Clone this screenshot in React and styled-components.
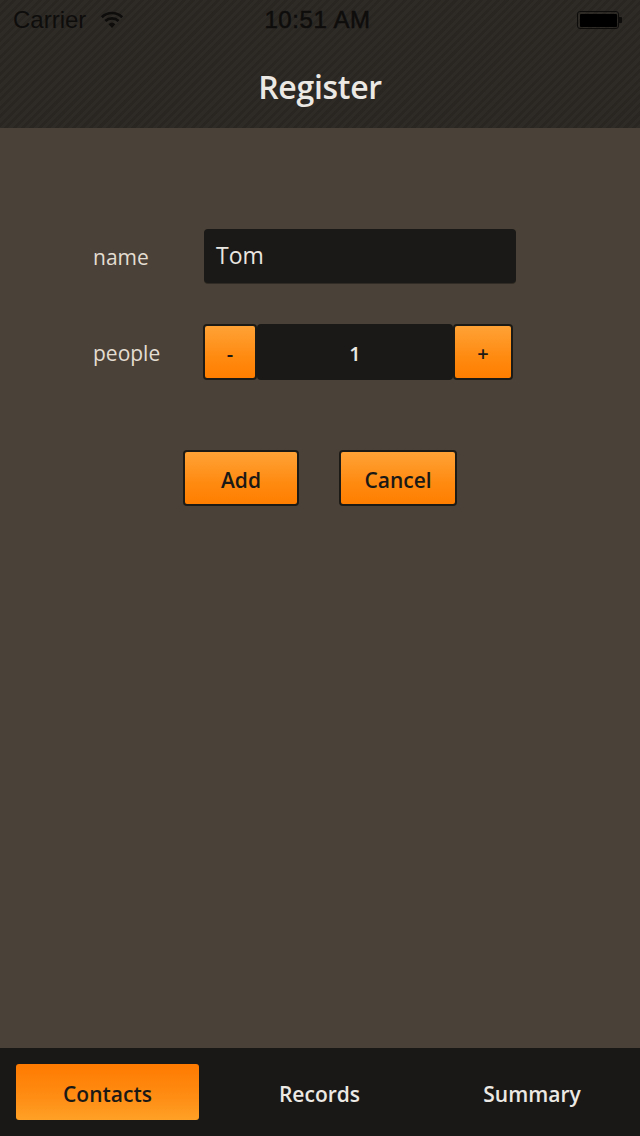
import React, { useState } from "react";
import styled, { createGlobalStyle } from "styled-components";

const Global = createGlobalStyle`
  html, body { margin: 0; padding: 0; }
  body { background: #4a4238; font-family: "Open Sans", sans-serif; }
  * { box-sizing: border-box; }
`;

const Screen = styled.div`
  width: 640px;
  height: 1136px;
  display: flex;
  flex-direction: column;
  background: #4a4238;
`;

const Top = styled.header`
  height: 128px;
  display: flex;
  flex-direction: column;
  background-color: #2a2723;
  background-image: repeating-linear-gradient(
    135deg,
    rgba(255, 255, 255, 0.018) 0px,
    rgba(255, 255, 255, 0.018) 3px,
    rgba(0, 0, 0, 0.02) 3px,
    rgba(0, 0, 0, 0.02) 6px
  );
`;

const StatusBar = styled.div`
  height: 40px;
  display: grid;
  grid-template-columns: 1fr auto 1fr;
  align-items: center;
  padding: 0 18px 0 13px;
  font-family: "Liberation Sans", Arial, sans-serif;
  font-size: 24px;
  color: #0e0d0c;
`;

const Carrier = styled.div`
  display: flex;
  align-items: center;
  gap: 14px;
`;

const Time = styled.div`
  font-weight: 400;
  letter-spacing: 0.6px;
  -webkit-text-stroke: 0.5px #0e0d0c;
`;

const BatteryWrap = styled.div`
  justify-self: end;
  display: flex;
  align-items: center;
`;

const BatteryBody = styled.div`
  width: 42px;
  height: 18px;
  border: 1.5px solid #0e0d0c;
  border-radius: 3px;
  padding: 1.5px;
  display: flex;
`;

const BatteryFill = styled.div`
  flex: 1;
  background: #000;
  border-radius: 1px;
`;

const BatteryTip = styled.div`
  width: 3px;
  height: 6px;
  background: #0e0d0c;
  border-radius: 0 1px 1px 0;
`;

const Title = styled.h1`
  flex: 1;
  margin: 0;
  display: flex;
  align-items: center;
  justify-content: center;
  padding-top: 4px;
  font-size: 32px;
  font-weight: 600;
  color: #ece9e4;
  letter-spacing: -0.3px;
`;

const Body = styled.main`
  flex: 1;
  padding: 100px 0 0 93px;
  display: flex;
  flex-direction: column;
`;

const Row = styled.div`
  display: flex;
  align-items: center;
  height: 56px;
  margin-bottom: ${(p) => p.$gap || 0}px;
`;

const Label = styled.label`
  width: 110px;
  font-size: 21px;
  color: #e4ddd2;
  padding-top: 2px;
`;

const TextField = styled.div`
  width: 312px;
  height: 54px;
  margin-left: 1px;
  background: #1b1917;
  border-radius: 4px;
  box-shadow: 0 1px 0 rgba(0, 0, 0, 0.35);
  display: flex;
  align-items: center;
  padding: 0 12px 2px;
  font-size: 23px;
  color: #e9e6e1;
`;

const Stepper = styled.div`
  display: flex;
  align-items: stretch;
  height: 56px;
`;

const Orange = styled.button`
  border: 2px solid #1c1a17;
  border-radius: 4px;
  background: linear-gradient(to bottom, #ffa236 0%, #ff8a10 60%, #ff7e00 100%);
  color: #1b1916;
  font-family: "Open Sans", sans-serif;
  font-weight: 600;
  cursor: pointer;
  padding: 2px 0 0;
`;

const StepBtn = styled(Orange)`
  width: ${(p) => p.$w}px;
  font-size: 20px;
`;

const StepValue = styled.div`
  width: 196px;
  background: #1b1917;
  border-radius: 4px;
  display: flex;
  align-items: center;
  justify-content: center;
  padding-top: 2px;
  font-size: 20px;
  font-weight: 600;
  color: #ece9e4;
`;

const Actions = styled.div`
  display: flex;
  gap: 40px;
  margin-top: 70px;
  padding-left: 90px;
`;

const ActionBtn = styled(Orange)`
  width: ${(p) => p.$w}px;
  height: 56px;
  font-size: 21px;
  font-weight: 600;
  padding-top: 4px;
`;

const TabBar = styled.nav`
  height: 88px;
  background: #1a1816;
  display: grid;
  grid-template-columns: 215px 209px 216px;
  align-items: center;
`;

const Tab = styled.button`
  justify-self: center;
  width: 183px;
  height: 56px;
  border: none;
  border-radius: 3px;
  padding: 4px 0 0;
  background: ${(p) =>
    p.$active ? "linear-gradient(to bottom, #ff7a00 0%, #ff8d14 60%, #ffa126 100%)" : "transparent"};
  color: ${(p) => (p.$active ? "#1b1916" : "#ece9e4")};
  font-family: "Open Sans", sans-serif;
  font-size: 21px;
  font-weight: 600;
  cursor: pointer;
`;

function Wifi() {
  return (
    <svg width="24" height="18" viewBox="0 0 24 18">
      <path d="M12 17 L8.6 13.2 A5 5 0 0 1 15.4 13.2 Z" fill="#0e0d0c" />
      <path d="M5.4 10 A9.6 9.6 0 0 1 18.6 10" stroke="#0e0d0c" strokeWidth="2.6" fill="none" />
      <path d="M1.8 6.2 A14.6 14.6 0 0 1 22.2 6.2" stroke="#0e0d0c" strokeWidth="2.6" fill="none" />
    </svg>
  );
}

export default function App() {
  const [people, setPeople] = useState(1);
  const [tab, setTab] = useState("Contacts");
  return (
    <Screen>
      <Global />
      <Top>
        <StatusBar>
          <Carrier>
            Carrier
            <Wifi />
          </Carrier>
          <Time>10:51 AM</Time>
          <BatteryWrap>
            <BatteryBody>
              <BatteryFill />
            </BatteryBody>
            <BatteryTip />
          </BatteryWrap>
        </StatusBar>
        <Title>Register</Title>
      </Top>
      <Body>
        <Row $gap={40}>
          <Label>name</Label>
          <TextField>Tom</TextField>
        </Row>
        <Row>
          <Label>people</Label>
          <Stepper>
            <StepBtn $w={54} onClick={() => setPeople(Math.max(0, people - 1))}>-</StepBtn>
            <StepValue>{people}</StepValue>
            <StepBtn $w={60} onClick={() => setPeople(people + 1)}>+</StepBtn>
          </Stepper>
        </Row>
        <Actions>
          <ActionBtn $w={116}>Add</ActionBtn>
          <ActionBtn $w={118}>Cancel</ActionBtn>
        </Actions>
      </Body>
      <TabBar>
        {["Contacts", "Records", "Summary"].map((t) => (
          <Tab key={t} $active={tab === t} onClick={() => setTab(t)}>
            {t}
          </Tab>
        ))}
      </TabBar>
    </Screen>
  );
}
